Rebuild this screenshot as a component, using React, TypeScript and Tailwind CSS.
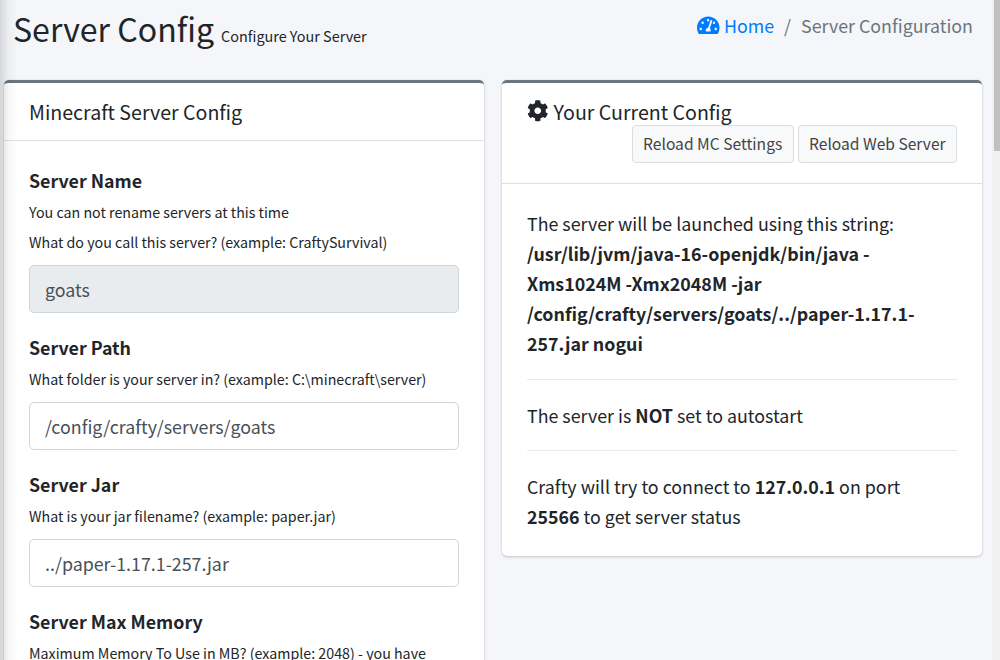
import type { ReactNode } from "react";
import { FaCog, FaTachometerAlt } from "react-icons/fa";

type CardProps = {
  header: ReactNode;
  children: ReactNode;
};

function Card({ header, children }: CardProps) {
  return (
    <section className="w-[480px] shrink-0 rounded-[5px] border-t-3 border-[#6c757d] bg-white shadow-[0_0_1px_rgba(0,0,0,0.13),0_1px_3px_rgba(0,0,0,0.2)]">
      <header className="border-b border-[#dfdfdf] px-[25px]">{header}</header>
      <div className="px-[25px]">{children}</div>
    </section>
  );
}

type FieldProps = {
  label: string;
  hints: string[];
  value: string;
  disabled?: boolean;
};

function Field({ label, hints, value, disabled = false }: FieldProps) {
  return (
    <div className="mb-[20.4px]">
      <label className="block h-[31px] text-[17.82px] leading-[29px] font-bold">{label}</label>
      {hints.map((hint) => (
        <p key={hint} className="mb-px text-[14.25px] leading-[29px]">
          {hint}
        </p>
      ))}
      <input
        type="text"
        readOnly
        disabled={disabled}
        value={value}
        className="mt-[9.2px] block h-[47.4px] w-full rounded-[5px] border border-[#ced4da] bg-white px-[15px] text-[17.82px] text-[#495057] outline-none disabled:bg-[#e9ecef]"
      />
    </div>
  );
}

const fields: FieldProps[] = [
  {
    label: "Server Name",
    hints: ["You can not rename servers at this time", "What do you call this server? (example: CraftySurvival)"],
    value: "goats",
    disabled: true,
  },
  {
    label: "Server Path",
    hints: ["What folder is your server in? (example: C:\\minecraft\\server)"],
    value: "/config/crafty/servers/goats",
  },
  {
    label: "Server Jar",
    hints: ["What is your jar filename? (example: paper.jar)"],
    value: "../paper-1.17.1-257.jar",
  },
  {
    label: "Server Max Memory",
    hints: ["Maximum Memory To Use in MB? (example: 2048) - you have"],
    value: "2048",
  },
];

const buttonClass =
  "h-[38px] rounded-[4px] border border-[#dddddd] bg-[#f8f9fa] px-[10.4px] pb-[2px] text-[15.6px] leading-[34px] whitespace-nowrap text-[#444444]";

export default function App() {
  return (
    <div className="relative flex h-[660px] w-[1000px] overflow-hidden bg-[#f4f6f9] font-['Noto_Sans_CJK_SC','Noto_Sans',sans-serif] text-[#212529]">
      <main className="w-[992px] shrink-0 pl-1">
        <div className="flex h-20 justify-between pr-[19px] pl-[9px]">
          <h1 className="flex items-baseline gap-[7px] pt-[7px] text-[32.1px] leading-[43px] whitespace-nowrap">
            Server Config
            <small className="text-[14.4px]">Configure Your Server</small>
          </h1>
          <nav className="flex h-[50px] items-center text-[17.82px] leading-[30px] whitespace-nowrap">
            <a href="#" className="flex items-center gap-[4px] text-[#007bff]">
              <FaTachometerAlt className="size-[22.5px]" />
              Home
            </a>
            <span className="px-[10px] text-[#6c757d]">/</span>
            <span className="text-[#6c757d]">Server Configuration</span>
          </nav>
        </div>

        <div className="flex items-start gap-[18px]">
          <Card header={<h3 className="pt-3 pb-3 text-[19.6px] leading-[33px]">Minecraft Server Config</h3>}>
            <form className="pt-[25px]">
              {fields.map((field) => (
                <Field key={field.label} {...field} />
              ))}
            </form>
          </Card>

          <Card
            header={
              <div className="pt-[13px] pb-5">
                <h3 className="flex h-[29px] items-center gap-[5px] pt-px text-[19.6px] leading-[33px]">
                  <FaCog className="size-[21.5px]" />
                  Your Current Config
                </h3>
                <div className="flex justify-end gap-1">
                  <button className={buttonClass}>Reload MC Settings</button>
                  <button className={buttonClass}>Reload Web Server</button>
                </div>
              </div>
            }
          >
            <div className="pt-6 pb-[25px] text-[17.84px] leading-[30px]">
              <p>
                The server will be launched using this string:
                <br />
                <b>
                  /usr/lib/jvm/java-16-openjdk/bin/java -<br />
                  Xms1024M -Xmx2048M -jar
                  <br />
                  /config/crafty/servers/goats/../paper-1.17.1-
                  <br />
                  257.jar nogui
                </b>
              </p>
              <hr className="mt-[21px] mb-5 border-[#e9e9e9]" />
              <p>
                The server is <b>NOT</b> set to autostart
              </p>
              <hr className="my-5 border-[#e9e9e9]" />
              <p>
                Crafty will try to connect to <b>127.0.0.1</b> on port
                <br />
                <b>25566</b> to get server status
              </p>
            </div>
          </Card>
        </div>
      </main>

      {/* scrollbar */}
      <div className="flex w-2 shrink-0 justify-end bg-[#f1f1f1]">
        <div className="h-[151px] w-1.5 bg-[#c1c1c1]" />
      </div>

      {/* shadow cast by the collapsed sidebar */}
      <div className="pointer-events-none absolute inset-y-0 left-0 w-[18px] bg-linear-to-r from-black/13 via-black/3 to-transparent" />
    </div>
  );
}
